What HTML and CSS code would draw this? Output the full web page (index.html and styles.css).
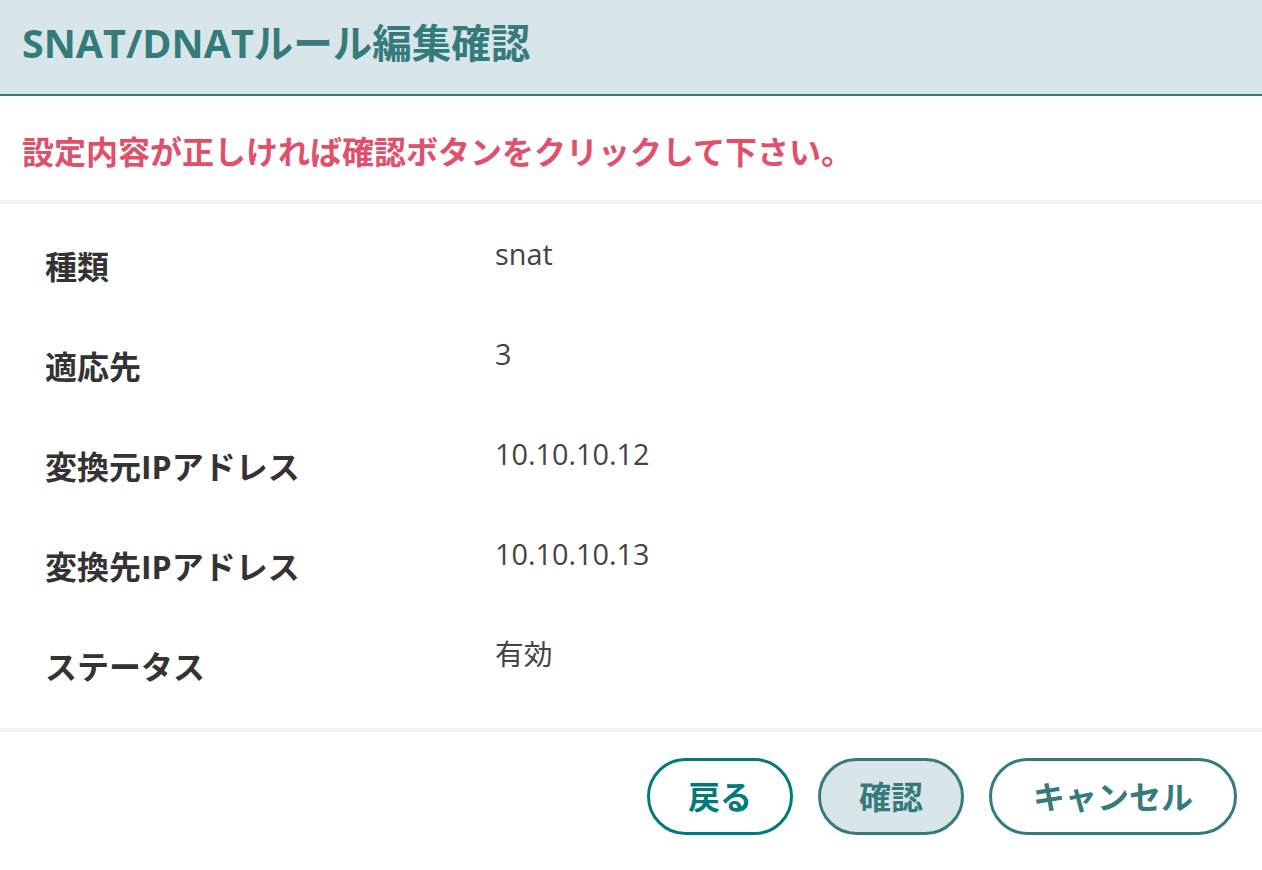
FILE: index.html
```html
<!DOCTYPE html>
<html lang="ja">
<head>
<meta charset="utf-8">
<title>SNAT/DNATルール編集確認</title>
<link rel="stylesheet" href="styles.css">
</head>
<body>
<div class="dialog">
  <header class="dialog-header">
    <h1 class="dialog-title">SNAT/DNATルール編集確認</h1>
  </header>
  <div class="notice">設定内容が正しければ確認ボタンをクリックして下さい。</div>
  <div class="details">
    <div class="row">
      <div class="label">種類</div>
      <div class="value">snat</div>
    </div>
    <div class="row">
      <div class="label">適応先</div>
      <div class="value">3</div>
    </div>
    <div class="row">
      <div class="label">変換元IPアドレス</div>
      <div class="value">10.10.10.12</div>
    </div>
    <div class="row">
      <div class="label">変換先IPアドレス</div>
      <div class="value">10.10.10.13</div>
    </div>
    <div class="row">
      <div class="label">ステータス</div>
      <div class="value">有効</div>
    </div>
  </div>
  <div class="footer">
    <button class="btn btn-back" type="button">戻る</button>
    <button class="btn btn-confirm" type="button">確認</button>
    <button class="btn btn-cancel" type="button">キャンセル</button>
  </div>
</div>
</body>
</html>
```

FILE: styles.css
```css
html, body {
  margin: 0;
  padding: 0;
  background: #ffffff;
}

body {
  font-family: "Open Sans", "Noto Sans CJK JP", sans-serif;
  color: #333333;
}

.dialog {
  width: 100%;
}

.dialog-header {
  box-sizing: border-box;
  height: 96px;
  background: #d8e6e9;
  border-bottom: 2px solid #367b7c;
  display: flex;
  align-items: center;
  padding: 0 22px 6px;
}

.dialog-title {
  margin: 0;
  font-size: 39.5px;
  line-height: 1.2;
  font-weight: 700;
  color: #367b7c;
}

.notice {
  box-sizing: border-box;
  height: 108px;
  padding: 8px 22px 0;
  display: flex;
  align-items: center;
  border-bottom: 4px solid #f2f2f2;
  color: #e0506b;
  font-size: 32px;
  font-weight: 700;
  line-height: 1.4;
}

.details {
  padding: 12px 0 12px 45px;
  display: flex;
  flex-direction: column;
}

.row {
  height: 100px;
  display: grid;
  grid-template-columns: 450px 1fr;
  align-items: start;
}

.label {
  padding-top: 27px;
  font-size: 32px;
  line-height: 48px;
  font-weight: 700;
  color: #333333;
}

.value {
  padding-top: 18px;
  font-size: 28.8px;
  line-height: 40px;
  font-weight: 400;
  color: #444444;
}

.footer {
  border-top: 4px solid #f2f2f2;
  display: flex;
  justify-content: flex-end;
  gap: 25px;
  padding: 26px 25px 30px;
}

.btn {
  box-sizing: border-box;
  height: 77px;
  padding: 0 38px;
  border-radius: 40px;
  border: 3px solid #367b7c;
  background: #ffffff;
  color: #367b7c;
  font-family: "Open Sans", "Noto Sans CJK JP", sans-serif;
  font-size: 32px;
  font-weight: 700;
  line-height: 1;
  cursor: pointer;
}

.btn-back {
  border-color: #007a7b;
  color: #007a7b;
}

.btn-confirm {
  background: #d8e6e9;
}

.btn-cancel {
  padding: 0 41px;
}
```
